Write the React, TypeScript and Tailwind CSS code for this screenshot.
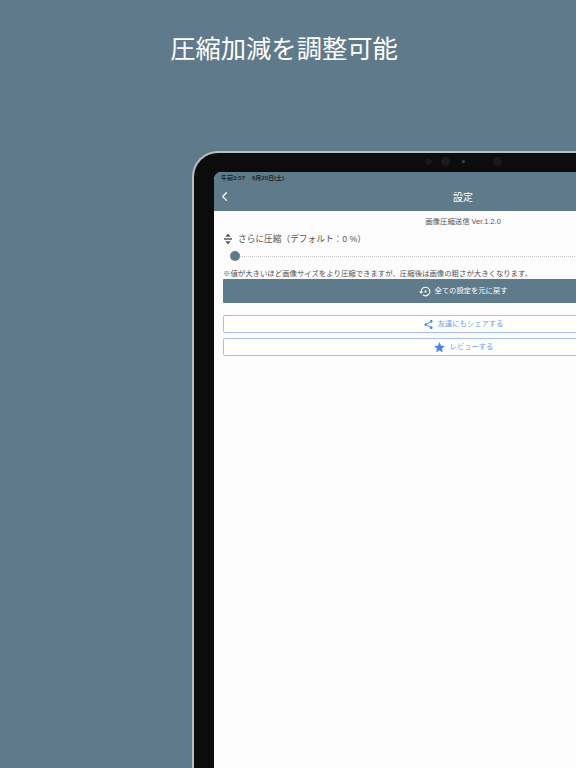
import { ChevronLeft } from "lucide-react";
import { MdSettingsBackupRestore, MdShare, MdStar } from "react-icons/md";

const font = { fontFamily: '"Liberation Sans", "Noto Sans CJK JP", sans-serif' };

function CompressIcon() {
  return (
    <svg viewBox="0 0 10 12" className="h-[12px] w-[10px] shrink-0" fill="#4c555b">
      <path d="M5 0.5 L7.6 3.8 H2.4 Z" />
      <rect x="1" y="5.3" width="8" height="1.4" />
      <path d="M5 11.5 L7.6 8.2 H2.4 Z" />
    </svg>
  );
}

function OutlineButton({ icon, label }: { icon: React.ReactNode; label: string }) {
  return (
    <button className="flex h-[18px] w-full items-center justify-center gap-[4px] rounded-[2px] border border-[#a8c0f0] bg-white text-[7.3px] text-[#6f9cf2]">
      {icon}
      <span>{label}</span>
    </button>
  );
}

export default function App() {
  return (
    <div className="h-[768px] w-[576px] overflow-hidden bg-[#5f7a8a]" style={font}>
      <div className="pt-[33px] pr-[8px] text-center text-[25.3px] leading-[32px] font-normal text-white">圧縮加減を調整可能</div>

      {/* tablet frame runs off the right and bottom edge */}
      <div className="mt-[86px] ml-[192px] h-[800px] w-[560px] rounded-tl-[26px] border-t-2 border-l-2 border-[#b9bfc3] bg-[#0c0c0c] pt-[19px] pl-[20px]">
        <div className="relative h-full w-[498px] overflow-hidden rounded-tl-[8px] bg-[#fcfcfc]">
          <div className="bg-[#5f7a8a]">
            <div className="flex h-[11px] items-center gap-[7px] pt-[1px] pl-[7px] text-[6px] leading-none font-bold text-[#1c252b]">
              <span>午前3:57</span>
              <span>6月20日(土)</span>
            </div>
            <div className="relative flex h-[28px] items-center justify-center text-[10px] text-white">
              <ChevronLeft className="absolute top-[6px] left-[3px] h-[15px] w-[15px]" strokeWidth={2} />
              <span>設定</span>
            </div>
          </div>

          <div className="flex flex-col pr-[9px] pl-[9px]">
            <div className="pt-[6px] text-center text-[7.4px] leading-[10px] text-[#555]">画像圧縮送信 Ver.1.2.0</div>
            <div className="flex items-center gap-[5px] pt-[5px] text-[8.7px] leading-[14px] text-[#555]">
              <CompressIcon />
              <span>さらに圧縮（デフォルト：0 %）</span>
            </div>
            <div className="flex h-[20px] items-center pl-[7px]">
              <div className="h-[10px] w-[10px] shrink-0 rounded-full bg-[#5f7a8a]" />
              <div className="flex-1 border-t border-dotted border-[#c4c4c4]" />
            </div>
            <div className="pt-[3px] text-[7.4px] leading-[10px] whitespace-nowrap text-[#555]">
              ※値が大きいほど画像サイズをより圧縮できますが、圧縮後は画像の粗さが大きくなります。
            </div>
            <button className="flex h-[24px] w-full items-center justify-center gap-[3px] rounded-[1px] bg-[#5f7a8a] text-[7.3px] text-white">
              <MdSettingsBackupRestore className="h-[13px] w-[13px]" />
              <span>全ての設定を元に戻す</span>
            </button>
            <div className="mt-[12px] flex flex-col gap-[5px]">
              <OutlineButton icon={<MdShare className="h-[11px] w-[11px] text-[#4a82ee]" />} label="友達にもシェアする" />
              <OutlineButton icon={<MdStar className="h-[13px] w-[13px] text-[#4a82ee]" />} label="レビューする" />
            </div>
          </div>
        </div>

        {/* camera dots in the bezel */}
        <div className="absolute top-[157px] left-[425px] flex items-center">
          <span className="h-[7px] w-[7px] rounded-full bg-[#181818]" />
          <span className="ml-[9px] h-[9px] w-[9px] rounded-full bg-[#1a1a1a]" />
          <span className="ml-[12px] h-[3px] w-[3px] rounded-full bg-[#1f4f80]" />
          <span className="ml-[28px] h-[9px] w-[9px] rounded-full bg-[#1a1a1a]" />
        </div>
      </div>
    </div>
  );
}
